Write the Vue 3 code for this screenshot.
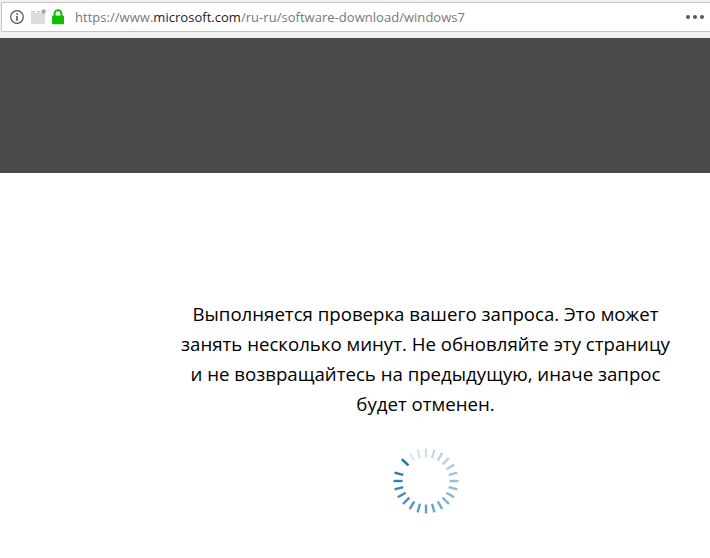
<template>
  <div class="page">
    <div class="toolbar">
      <div class="urlbar">
        <svg class="info-icon" width="16" height="16" viewBox="0 0 16 16">
          <circle cx="8" cy="8" r="6.3" fill="none" stroke="#555" stroke-width="1.2" />
          <rect x="7.2" y="7" width="1.6" height="4.8" fill="#555" />
          <rect x="7.2" y="4.2" width="1.6" height="1.7" fill="#555" />
        </svg>
        <svg class="tracking-icon" width="16" height="16" viewBox="0 0 16 16">
          <rect x="0" y="4" width="14" height="11" fill="#dcdcdc" />
          <rect x="0" y="2" width="4" height="1.5" fill="#c8c8c8" />
          <rect x="6" y="2" width="3" height="1.5" fill="#c8c8c8" />
          <circle cx="12.5" cy="2.5" r="2.3" fill="#8fb0cc" />
        </svg>
        <svg class="lock-icon" width="14" height="16" viewBox="0 0 14 16">
          <path d="M3.6 7V4.6a3.4 3.4 0 0 1 6.8 0V7" fill="none" stroke="#12bc00" stroke-width="2" />
          <rect x="1" y="6.6" width="12" height="8.6" rx="1" fill="#12bc00" />
        </svg>
        <span class="url">https://www.<b>microsoft.com</b>/ru-ru/software-download/windows7</span>
        <div class="dots"><i></i><i></i><i></i></div>
      </div>
    </div>
    <div class="hero"></div>
    <div class="content">
      <p class="message">
        Выполняется проверка вашего запроса. Это может<br />
        занять несколько минут. Не обновляйте эту страницу<br />
        и не возвращайтесь на предыдущую, иначе запрос<br />
        будет отменен.
      </p>
      <svg class="spinner" width="70" height="70" viewBox="0 0 70 70">
        <line
          v-for="tick in ticks"
          :key="tick.angle"
          x1="35"
          y1="2.5"
          x2="35"
          y2="11.5"
          stroke="#1f74ae"
          stroke-width="2.4"
          :stroke-opacity="tick.opacity"
          :transform="`rotate(${tick.angle} 35 35)`"
        />
      </svg>
    </div>
  </div>
</template>

<script setup>
// spokes every 15deg, darkest at upper left, fading out going counter-clockwise
const count = 23
const head = -48
const ticks = Array.from({ length: count }, (_, i) => ({
  angle: i === 0 ? head : -60 - i * 15,
  opacity: (1 - (i / (count - 1)) * 0.85).toFixed(2)
}))
</script>

<style>
html,
body {
  margin: 0;
  background: #fff;
}
</style>

<style scoped>
.page {
  width: 710px;
  height: 558px;
  overflow: hidden;
  background: #fff;
  font-family: "Open Sans", "Noto Sans", sans-serif;
}

.toolbar {
  height: 38px;
  box-sizing: border-box;
  padding: 2px 0 6px 1px;
  background: #f1f1f1;
}

.urlbar {
  height: 30px;
  box-sizing: border-box;
  display: flex;
  align-items: center;
  padding-left: 7px;
  background: #fff;
  border: 1px solid #c4c4c4;
  border-right: none;
  border-radius: 2px 0 0 2px;
}

.info-icon {
  flex: none;
}

.tracking-icon {
  flex: none;
  margin-left: 6px;
}

.lock-icon {
  flex: none;
  margin-left: 4px;
}

.url {
  margin-left: 10px;
  font-size: 13px;
  letter-spacing: 0.03px;
  color: #777;
  white-space: nowrap;
}

.url b {
  font-weight: 400;
  color: #222;
}

.dots {
  display: flex;
  gap: 3px;
  margin-left: auto;
  margin-right: 6px;
}

.dots i {
  width: 4px;
  height: 4px;
  border-radius: 50%;
  background: #595959;
}

.hero {
  height: 135px;
  background: #4a4a4a;
}

.content {
  display: flex;
  flex-direction: column;
  align-items: center;
  padding: 126px 0 0 141px;
}

.message {
  margin: 0;
  font-size: 18.65px;
  line-height: 30px;
  color: #000;
  text-align: center;
  white-space: nowrap;
}

.spinner {
  margin-top: 27px;
}
</style>
